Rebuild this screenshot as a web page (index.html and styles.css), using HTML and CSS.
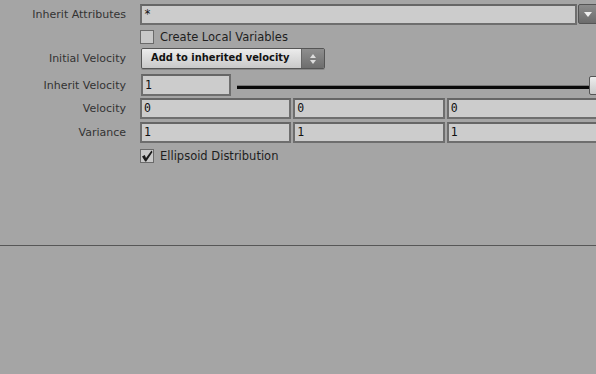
FILE: index.html
```html
<!DOCTYPE html>
<html lang="en">
<head>
    <meta charset="UTF-8">
    <title>Inherit Attributes</title>
    <link rel="stylesheet" href="styles.css">
</head>
<body>

<div class="panel">
    <div class="row row-attr">
        <label class="lbl">Inherit Attributes</label>
        <div class="field field-wide">*</div>
        <div class="menu-btn"><span class="tri-down"></span></div>
    </div>

    <div class="row row-check">
        <span class="lbl"></span>
        <span class="check"></span>
        <span class="check-text">Create Local Variables</span>
    </div>

    <div class="row row-menu">
        <label class="lbl">Initial Velocity</label>
        <div class="select">
            <span class="select-text">Add to inherited velocity</span>
            <span class="select-arrows"><span class="tri-up"></span><span class="tri-down small"></span></span>
        </div>
    </div>

    <div class="row row-slider">
        <label class="lbl">Inherit Velocity</label>
        <div class="field field-short">1</div>
        <div class="slider">
            <div class="slider-line"></div>
            <div class="slider-handle"></div>
        </div>
    </div>

    <div class="row row-vec">
        <label class="lbl">Velocity</label>
        <div class="field field-vec">0</div>
        <div class="field field-vec">0</div>
        <div class="field field-vec">0</div>
    </div>

    <div class="row row-vec2">
        <label class="lbl">Variance</label>
        <div class="field field-vec">1</div>
        <div class="field field-vec">1</div>
        <div class="field field-vec">1</div>
    </div>

    <div class="row row-check2">
        <span class="lbl"></span>
        <span class="check">
            <svg width="12" height="12" viewBox="0 0 12 12"><path d="M1 6.5 L3.8 5 L5 8 L10.5 0.5 L11.5 2 L5.2 11.5 L4.2 11.5 Z" fill="#1a1a1a"/></svg>
        </span>
        <span class="check-text">Ellipsoid Distribution</span>
    </div>
</div>

<div class="separator"></div>

</body>
</html>
```

FILE: styles.css
```css
/* panel de parametros */
html, body {
    margin: 0;
    padding: 0;
    background-color: #a5a5a5;
    overflow: hidden;
    height: 100%;
}
body {
    font-family: "DejaVu Sans", sans-serif;
    font-size: 11px;
    color: #262626;
}
.panel {
    width: 600px;
    padding-top: 4px;
    height: 241px;
}
.row {
    display: flex;
    align-items: center;
}
.lbl {
    width: 126px;
    flex: none;
    text-align: right;
    margin-right: 14px;
    color: #333;
}
.row-attr { height: 21px; }
.row-check { height: 14px; margin-top: 5px; }
.row-menu { height: 21px; margin-top: 4px; }
.row-slider { height: 22px; margin-top: 5px; }
.row-vec { height: 21px; margin-top: 2px; }
.row-vec2 { height: 21px; margin-top: 3px; }
.row-check2 { height: 14px; margin-top: 6px; }

/* campos de texto */
.field {
    box-sizing: border-box;
    height: 100%;
    background-color: #cccccc;
    border: 2px solid #6e6e6e;
    border-top-color: #666;
    font-family: "DejaVu Sans Mono", monospace;
    font-size: 11.5px;
    color: #111;
    padding: 0 0 1px 2px;
    display: flex;
    align-items: center;
}
.field-wide { width: 437px; }
.field-short { width: 90px; margin-left: 1px; }
.field-vec { width: 152px; margin-right: 2px; }

.menu-btn {
    box-sizing: border-box;
    width: 20px;
    height: 20px;
    margin-left: 1px;
    align-self: flex-start;
    border: 1px solid #555;
    border-radius: 2px;
    background: linear-gradient(#8c8c8c, #6c6c6c);
    display: flex;
    align-items: center;
    justify-content: center;
}
.tri-down {
    width: 0;
    height: 0;
    border-left: 4px solid transparent;
    border-right: 4px solid transparent;
    border-top: 5px solid #eee;
}
.tri-down.small, .tri-up {
    border-left-width: 3px;
    border-right-width: 3px;
}
.tri-down.small {
    border-top: 4px solid #ddd;
    margin-top: 2px;
}
.tri-up {
    width: 0;
    height: 0;
    border-left: 3px solid transparent;
    border-right: 3px solid transparent;
    border-bottom: 4px solid #ddd;
}

/* checkbox */
.check {
    box-sizing: border-box;
    width: 14px;
    height: 14px;
    background-color: #c8c8c8;
    border: 1px solid #6a6a6a;
    display: flex;
    align-items: center;
    justify-content: center;
}
.check-text {
    margin-left: 6px;
    font-size: 11.5px;
    color: #1e1e1e;
}

/* menu de selecao */
.select {
    box-sizing: border-box;
    width: 184px;
    height: 21px;
    margin-left: 1px;
    border: 1px solid #555;
    border-radius: 2px;
    display: flex;
    overflow: hidden;
    box-shadow: 0 1px 0 #888;
}
.select-text {
    flex: 1;
    background: linear-gradient(#ececec, #c9c9c9);
    font-family: "DejaVu Sans Condensed", "DejaVu Sans", sans-serif;
    font-weight: bold;
    white-space: nowrap;
    color: #111;
    padding-left: 9px;
    padding-bottom: 2px;
    display: flex;
    align-items: center;
}
.select-arrows {
    width: 22px;
    background: linear-gradient(#8e8e8e, #6e6e6e);
    border-left: 1px solid #666;
    display: flex;
    flex-direction: column;
    align-items: center;
    justify-content: center;
}

/* slider */
.slider {
    flex: 1;
    position: relative;
    height: 100%;
    margin-left: 6px;
}
.slider-line {
    position: absolute;
    left: 0;
    right: 0;
    top: 11px;
    height: 3px;
    background-color: #0a0a0a;
    border-top: 1px solid #777;
}
.slider-handle {
    position: absolute;
    left: 352px;
    top: 2px;
    width: 9px;
    height: 19px;
    box-sizing: border-box;
    background: linear-gradient(#eee, #c8c8c8);
    border: 1px solid #555;
    border-radius: 2px;
}

.separator {
    height: 1px;
    background-color: #575757;
}
```
